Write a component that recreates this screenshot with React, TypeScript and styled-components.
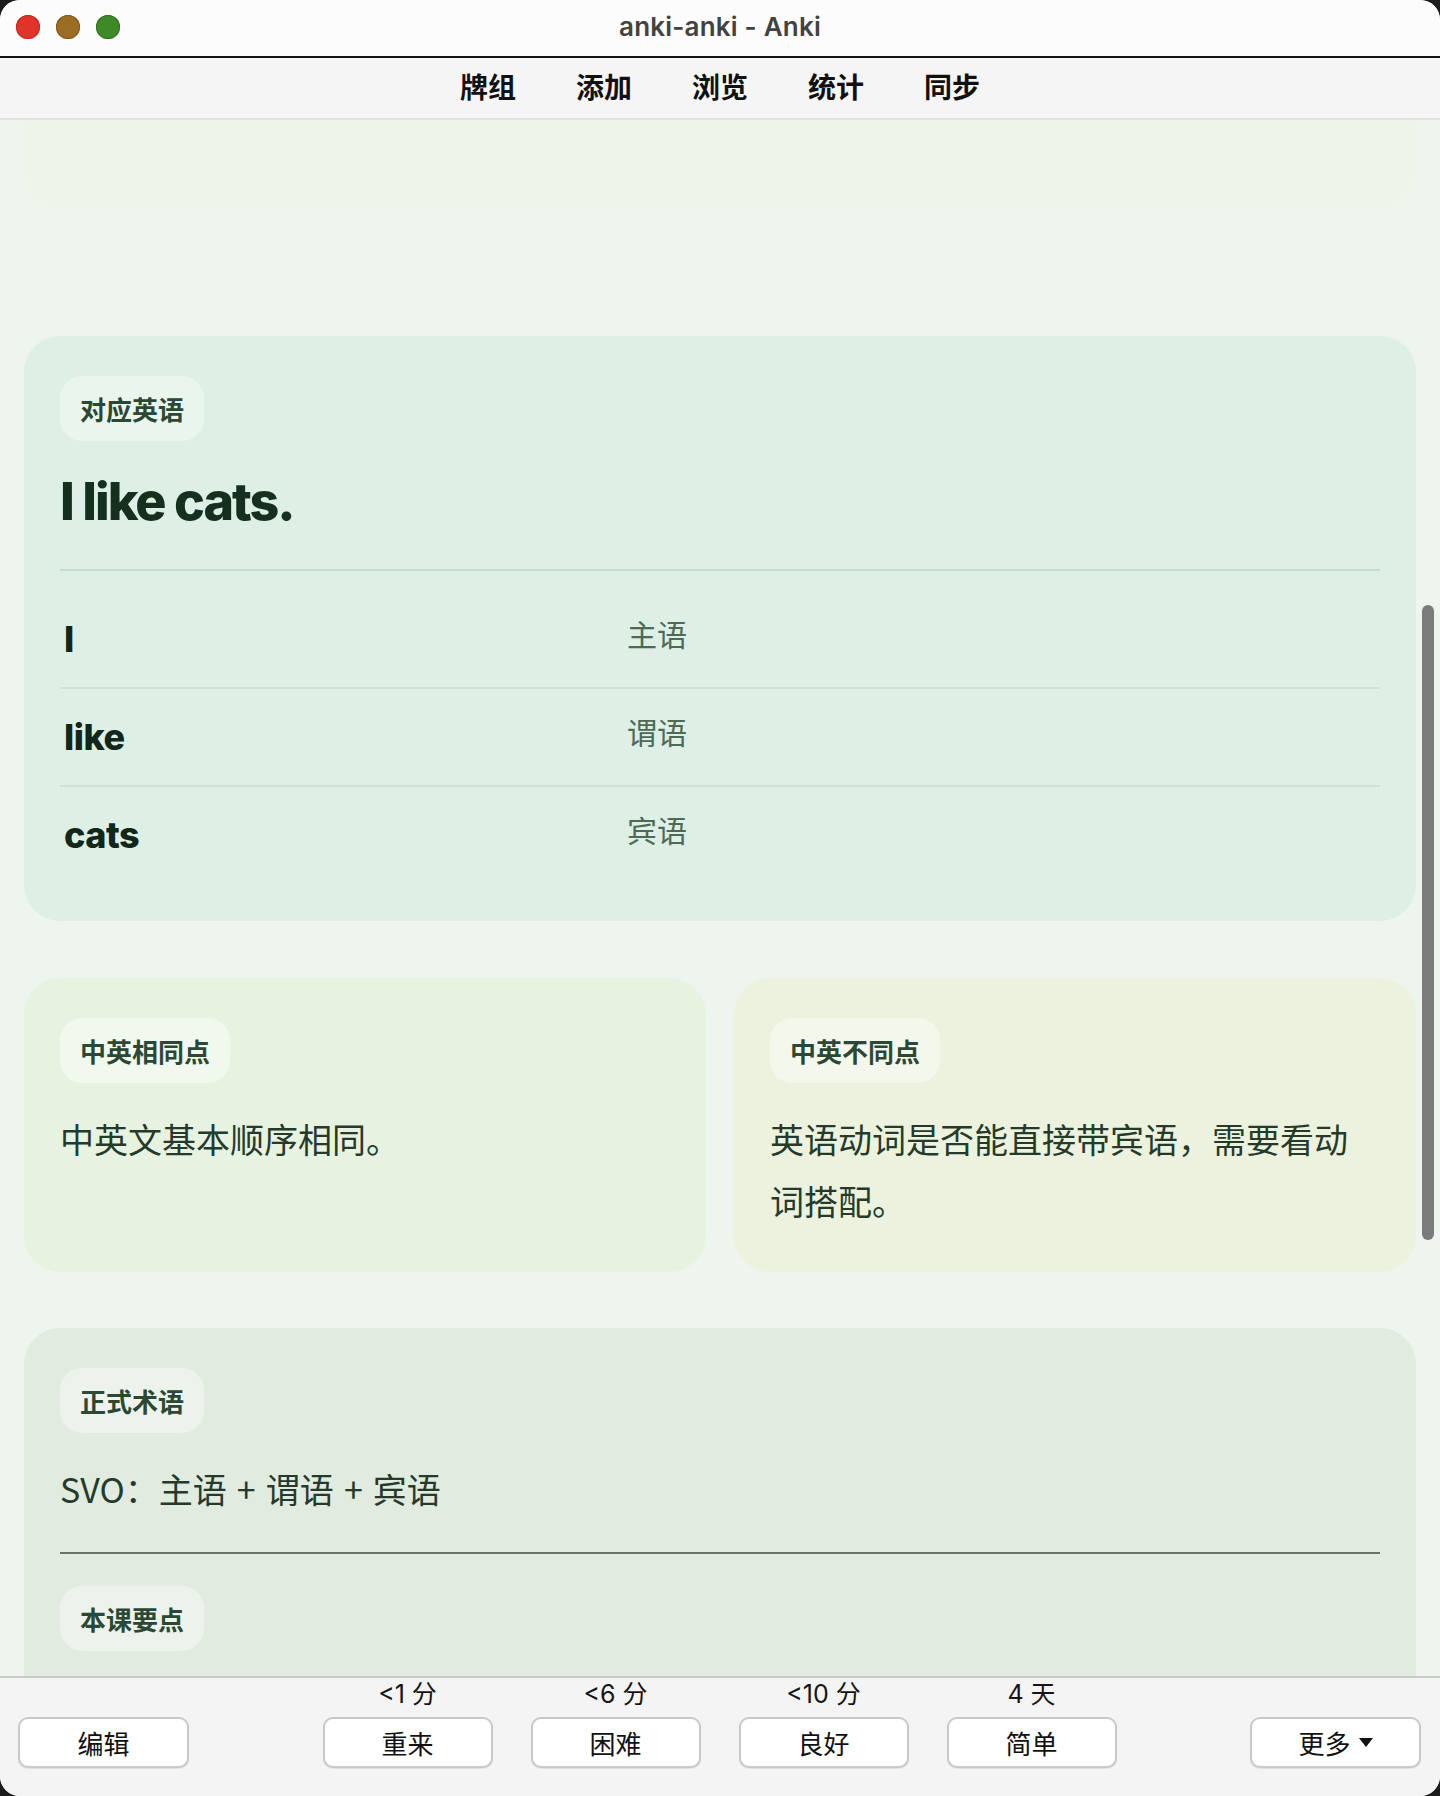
import React from "react";
import styled, { createGlobalStyle } from "styled-components";

const GlobalStyle = createGlobalStyle`
  html, body {
    margin: 0;
    padding: 0;
    background: #1c1c1c;
  }
  body {
    font-family: Inter, "Noto Sans CJK SC", sans-serif;
    -webkit-font-smoothing: antialiased;
  }
  *, *::before, *::after {
    box-sizing: border-box;
  }
`;

const FONT = `Inter, "Noto Sans CJK SC", sans-serif`;
const CJK = `"Noto Sans CJK SC", Inter, sans-serif`;

/* ---------- window chrome ---------- */

const Window = styled.div`
  width: 1440px;
  height: 1796px;
  display: flex;
  flex-direction: column;
  border-radius: 20px;
  overflow: hidden;
  background: #eef5ee;
`;

const TitleBar = styled.header`
  flex: none;
  height: 58px;
  display: grid;
  grid-template-columns: 1fr auto 1fr;
  align-items: center;
  padding: 0 16px 2px;
  background: #fcfcfc;
  border-bottom: 2px solid #151515;
`;

const Lights = styled.div`
  display: flex;
  gap: 16px;
`;

const Light = styled.span<{ $fill: string; $edge: string }>`
  width: 24px;
  height: 24px;
  border-radius: 50%;
  background: ${(p) => p.$fill};
  box-shadow: inset 0 0 0 1px ${(p) => p.$edge};
`;

const WindowTitle = styled.div`
  margin-bottom: 2px;
  font-family: ${FONT};
  font-size: 26px;
  font-weight: 600;
  color: #424242;
  letter-spacing: 0.2px;
`;

const Toolbar = styled.nav`
  flex: none;
  height: 62px;
  display: flex;
  justify-content: center;
  align-items: center;
  gap: 60px;
  padding-bottom: 4px;
  background: #f5f5f5;
  border-bottom: 2px solid #e1e1e1;
`;

const ToolItem = styled.span`
  font-family: ${CJK};
  font-size: 28px;
  font-weight: 700;
  line-height: 36px;
  color: #111;
`;

/* ---------- card area ---------- */

const Content = styled.main`
  flex: 1;
  position: relative;
  overflow: hidden;
  padding: 0 24px;
  display: flex;
  flex-direction: column;
`;

const FadedCard = styled.div`
  flex: none;
  height: 90px;
  border-radius: 0 0 36px 36px;
  background: rgba(234, 246, 226, 0.25);
  margin-bottom: 126px;
`;

const Card = styled.section<{ $tone: string; $pb?: number; $minH?: number }>`
  display: flex;
  flex-direction: column;
  background: ${(p) => p.$tone};
  border-radius: 36px;
  padding: 40px 36px ${(p) => p.$pb ?? 40}px;
  min-height: ${(p) => (p.$minH ? `${p.$minH}px` : "auto")};
  flex: none;
`;

const Pill = styled.span<{ $tone: string }>`
  align-self: flex-start;
  font-family: ${CJK};
  font-size: 26px;
  font-weight: 700;
  line-height: 35px;
  padding: 15px 20px;
  border-radius: 22px;
  color: #2b4834;
  background: ${(p) => p.$tone};
`;

const Sentence = styled.h1`
  margin: 31px 0 0;
  padding-bottom: 37px;
  border-bottom: 2px solid #c8dbcf;
  font-family: ${FONT};
  font-size: 52px;
  font-weight: 800;
  line-height: 60px;
  letter-spacing: -2px;
  color: #15301f;
`;

const WordTable = styled.div`
  margin-top: 20px;
  display: flex;
  flex-direction: column;
`;

const WordRow = styled.div`
  height: 98px;
  display: grid;
  grid-template-columns: 563px 1fr;
  align-items: center;
  border-bottom: 2px solid #cfe1d6;

  &:last-child {
    border-bottom-color: transparent;
  }
`;

const Word = styled.span`
  padding-left: 4px;
  font-family: ${FONT};
  font-size: 36px;
  font-weight: 800;
  letter-spacing: -0.5px;
  color: #13261a;
`;

const Role = styled.span`
  padding: 0 0 12px 4px;
  font-family: ${CJK};
  font-size: 30px;
  font-weight: 400;
  color: #4c6a56;
`;

const Pair = styled.div`
  flex: none;
  display: grid;
  grid-template-columns: 1fr 1fr;
  gap: 28px;
  margin: 57px 0 56px;
`;

const Body = styled.p`
  margin: 25px 0 0;
  font-family: ${CJK};
  font-size: 34px;
  font-weight: 400;
  line-height: 62px;
  word-spacing: 2.5px;
  color: #253a2b;
`;

const Rule = styled.hr`
  margin: 32px 0 32px;
  border: none;
  height: 2px;
  background: #6c716c;
`;

const ScrollThumb = styled.div`
  position: absolute;
  right: 6px;
  top: 485px;
  width: 12px;
  height: 635px;
  border-radius: 6px;
  background: #7a7b7a;
`;

/* ---------- answer bar ---------- */

const AnswerBar = styled.footer`
  flex: none;
  height: 120px;
  display: flex;
  align-items: flex-end;
  justify-content: space-between;
  padding: 0 19px 28px 18px;
  background: #f4f4f4;
  border-top: 2px solid #c9c9c9;
`;

const Ease = styled.div`
  display: flex;
  gap: 38px;
`;

const EaseColumn = styled.div`
  display: flex;
  flex-direction: column;
  align-items: center;
  gap: 8px;
`;

const Due = styled.span`
  font-family: ${FONT};
  font-size: 25px;
  line-height: 30px;
  color: #151515;
`;

const BarButton = styled.button<{ $w?: number }>`
  width: ${(p) => p.$w ?? 170}px;
  height: 51px;
  display: flex;
  align-items: center;
  justify-content: center;
  gap: 8px;
  padding: 0;
  background: #fff;
  border: 2px solid #c9c9c9;
  border-radius: 10px;
  box-shadow: 0 1px 1px rgba(0, 0, 0, 0.08);
  font-family: ${CJK};
  font-size: 26px;
  line-height: 32px;
  color: #111;
`;

const Caret = () => (
  <svg width="14" height="9" viewBox="0 0 14 9" aria-hidden="true">
    <path d="M0 0 H14 L7 9 Z" fill="#111" />
  </svg>
);

const words = [
  { en: "I", zh: "主语" },
  { en: "like", zh: "谓语" },
  { en: "cats", zh: "宾语" },
];

const answers = [
  { due: "<1 分", label: "重来" },
  { due: "<6 分", label: "困难" },
  { due: "<10 分", label: "良好" },
  { due: "4 天", label: "简单" },
];

export default function App() {
  return (
    <>
      <GlobalStyle />
      <Window>
        <TitleBar>
          <Lights>
            <Light $fill="#e0342a" $edge="#c42a21" />
            <Light $fill="#9b6d24" $edge="#85591a" />
            <Light $fill="#3d8a27" $edge="#2f7420" />
          </Lights>
          <WindowTitle>anki-anki - Anki</WindowTitle>
          <span />
        </TitleBar>

        <Toolbar>
          <ToolItem>牌组</ToolItem>
          <ToolItem>添加</ToolItem>
          <ToolItem>浏览</ToolItem>
          <ToolItem>统计</ToolItem>
          <ToolItem>同步</ToolItem>
        </Toolbar>

        <Content>
          <FadedCard />

          <Card $tone="#deefe5" $pb={36}>
            <Pill $tone="#eaf5ee">对应英语</Pill>
            <Sentence>I like cats.</Sentence>
            <WordTable>
              {words.map((w) => (
                <WordRow key={w.en}>
                  <Word>{w.en}</Word>
                  <Role>{w.zh}</Role>
                </WordRow>
              ))}
            </WordTable>
          </Card>

          <Pair>
            <Card $tone="#e7f3e0" $pb={40}>
              <Pill $tone="#f1f8ed">中英相同点</Pill>
              <Body>中英文基本顺序相同。</Body>
            </Card>
            <Card $tone="#ecf2de" $pb={40}>
              <Pill $tone="#f4f7eb">中英不同点</Pill>
              <Body>英语动词是否能直接带宾语，需要看动词搭配。</Body>
            </Card>
          </Pair>

          <Card $tone="#e2ebe0" $minH={480}>
            <Pill $tone="#edf2ec">正式术语</Pill>
            <Body>SVO：主语 + 谓语 + 宾语</Body>
            <Rule />
            <Pill $tone="#edf2ec">本课要点</Pill>
          </Card>

          <ScrollThumb />
        </Content>

        <AnswerBar>
          <BarButton $w={171}>编辑</BarButton>
          <Ease>
            {answers.map((a) => (
              <EaseColumn key={a.label}>
                <Due>{a.due}</Due>
                <BarButton>{a.label}</BarButton>
              </EaseColumn>
            ))}
          </Ease>
          <BarButton $w={171}>
            更多
            <Caret />
          </BarButton>
        </AnswerBar>
      </Window>
    </>
  );
}
